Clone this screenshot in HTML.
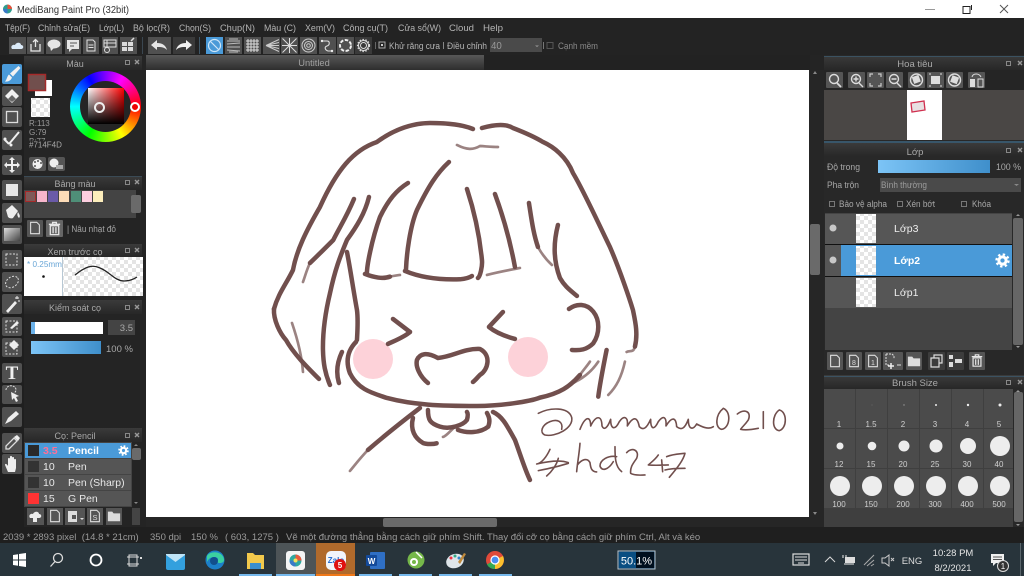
<!DOCTYPE html>
<html><head><meta charset="utf-8"><title>MediBang Paint Pro</title>
<style>
html,body{margin:0;padding:0;width:1024px;height:576px;overflow:hidden;background:#242424}
.a{position:absolute}
svg{position:absolute;left:0;top:0;filter:blur(.3px)}
text{font-family:"Liberation Sans",sans-serif;font-size:10px;fill:#b5b5b5}
.m{font-size:9.6px;fill:#b4b4b4}
.h{font-size:9px;fill:#a8a8a8;text-anchor:middle}
.b{fill:#505050}
.w{fill:#e6e6e6}
.l{fill:none;stroke:#e0e0e0;stroke-width:1.3}
.d{fill:none;stroke:#714F4D;stroke-width:13.5;stroke-linecap:round;stroke-linejoin:round}
.f{fill:none;stroke:#714F4D;stroke-width:8;stroke-linecap:round;stroke-linejoin:round;opacity:.7}
.t{fill:none;stroke:#714F4D;stroke-width:4.8;stroke-linecap:round;stroke-linejoin:round}
.s{font-size:8px;fill:#cfcfcf;text-anchor:middle}
.st{font-size:9.5px;fill:#9a9a9a}
.pi{fill:none;stroke:#888}
.px{stroke:#999;stroke-width:1.4}
</style></head><body>
<svg width="1024" height="576" viewBox="0 0 1024 576" xmlns="http://www.w3.org/2000/svg">
<defs>
<pattern id="ck" width="8" height="8" patternUnits="userSpaceOnUse"><rect width="8" height="8" fill="#fff"/><rect width="4" height="4" fill="#e4e4e4"/><rect x="4" y="4" width="4" height="4" fill="#e4e4e4"/></pattern>
<linearGradient id="hd" x1="0" y1="0" x2="0" y2="1"><stop offset="0" stop-color="#3a3a3a"/><stop offset="1" stop-color="#272727"/></linearGradient>
<linearGradient id="tab" x1="0" y1="0" x2="0" y2="1"><stop offset="0" stop-color="#585858"/><stop offset="1" stop-color="#2e2e2e"/></linearGradient>
<linearGradient id="bl" x1="0" y1="0" x2="1" y2="0"><stop offset="0" stop-color="#7cc4f6"/><stop offset="1" stop-color="#3f8fcb"/></linearGradient>
<linearGradient id="gr" x1="0" y1="0" x2="1" y2="1"><stop offset="0" stop-color="#ddd"/><stop offset="1" stop-color="#444"/></linearGradient>
<symbol id="gear" viewBox="0 0 14 14"><circle cx="7" cy="7" r="3.4" fill="none" stroke="#fff" stroke-width="2.8"/><circle cx="7" cy="7" r="5.6" fill="none" stroke="#fff" stroke-width="2.2" stroke-dasharray="2.2 2.2"/></symbol>
<symbol id="doc" viewBox="0 0 16 16"><path d="M3 1.500h7l3 3v10H3z" fill="none" stroke="#e0e0e0" stroke-width="1.200"/></symbol>
<symbol id="trash" viewBox="0 0 16 16"><path d="M2 3.500h12M6 3V1.500h4V3M3.500 5h9v9.500h-9zM6.500 6.500v6.500M9.500 6.500v6.500" fill="none" stroke="#e6e6e6" stroke-width="1.400"/></symbol>
<symbol id="folder" viewBox="0 0 16 16"><path d="M1 3h5l1.500 2H15v9H1z" fill="#dcdcdc"/></symbol>
</defs>

<!-- base -->
<rect width="1024" height="576" fill="#242424"/>
<!-- title bar -->
<rect width="1024" height="18" fill="#fff"/>
<circle cx="7.500" cy="9" r="4.500" fill="#2f9e8f"/><path d="M7.500 4.500a4.500 4.500 0 0 1 4.500 4.500H7.500z" fill="#e8503a"/><path d="M3 9a4.500 4.500 0 0 0 4.500 4.500V9z" fill="#3a78c8"/>
<text x="17" y="13" textLength="112" lengthAdjust="spacingAndGlyphs" style="font-size:10px;fill:#333">MediBang Paint Pro (32bit)</text>
<path d="M925 9.500h10" stroke="#999" stroke-width="1"/>
<path d="M963 6.500h7v7h-7zM971.500 5v5" fill="none" stroke="#222" stroke-width="1"/>
<path d="M1000 5l8 8M1008 5l-8 8" stroke="#555" stroke-width="1"/>

<!-- menu -->
<rect y="18" width="1024" height="37" fill="#232323"/>
<g>
<text class="m" x="5" y="31" textLength="25" lengthAdjust="spacingAndGlyphs">Tệp(F)</text>
<text class="m" x="38" y="31" textLength="52" lengthAdjust="spacingAndGlyphs">Chỉnh sửa(E)</text>
<text class="m" x="99" y="31" textLength="25" lengthAdjust="spacingAndGlyphs">Lớp(L)</text>
<text class="m" x="133" y="31" textLength="37" lengthAdjust="spacingAndGlyphs">Bộ lọc(R)</text>
<text class="m" x="179" y="31" textLength="32" lengthAdjust="spacingAndGlyphs">Chọn(S)</text>
<text class="m" x="220" y="31" textLength="35" lengthAdjust="spacingAndGlyphs">Chụp(N)</text>
<text class="m" x="264" y="31" textLength="32" lengthAdjust="spacingAndGlyphs">Màu (C)</text>
<text class="m" x="305" y="31" textLength="30" lengthAdjust="spacingAndGlyphs">Xem(V)</text>
<text class="m" x="343" y="31" textLength="45" lengthAdjust="spacingAndGlyphs">Công cụ(T)</text>
<text class="m" x="398" y="31" textLength="43" lengthAdjust="spacingAndGlyphs">Cửa sổ(W)</text>
<text class="m" x="449" y="31" textLength="25" lengthAdjust="spacingAndGlyphs">Cloud</text>
<text class="m" x="483" y="31" textLength="20" lengthAdjust="spacingAndGlyphs">Help</text>
</g>
<!-- toolbar -->
<g>
<rect class="b" x="9" y="37" width="17" height="17" fill="#555"/>
<path d="M12 49c-2-3 1-5 3-4 1-3 6-3 6 0 3 0 3 4 0 4z" fill="#dbeaf8"/>
<rect class="b" x="27" y="37" width="17" height="17"/><path d="M31 44v7h9v-7M35.500 47v-7M33 42l2.500-2.500L38 42" fill="none" stroke="#e6e6e6" stroke-width="1.300"/>
<rect class="b" x="46" y="37" width="16" height="17"/><ellipse cx="54" cy="44" rx="6.500" ry="4.500" fill="#e6e6e6"/><path d="M50 47l1 4 3-3z" fill="#e6e6e6"/>
<rect class="b" x="65" y="37" width="16" height="17"/><rect x="67" y="40" width="12" height="9" fill="#e6e6e6"/><path d="M70 43h7M70 46h4" stroke="#555"/><path d="M69 49v3l3-3z" fill="#e6e6e6"/>
<rect class="b" x="83" y="37" width="16" height="17"/><path d="M87 40h6l2 2v9h-8zM88.500 45h5M88.500 47.500h5" class="l" style="stroke-width:1"/>
<rect class="b" x="102" y="37" width="16" height="17"/><path d="M104 40h12v7h-12zM104 43h12M107 40v7" class="l" style="stroke-width:1"/><circle cx="107" cy="50" r="2.500" fill="none" stroke="#ddd"/>
<rect class="b" x="120" y="37" width="17" height="17"/><rect x="122" y="42" width="5" height="4" fill="#ddd"/><rect x="122" y="47" width="5" height="4" fill="#ddd"/><rect x="128" y="42" width="5" height="4" fill="#ddd"/><rect x="128" y="47" width="5" height="4" fill="#ddd"/><path d="M131 41l3-3" stroke="#ddd" stroke-width="1.500"/>
<rect x="142" y="37" width="1" height="17" fill="#3a4650"/>
<rect class="b" x="148" y="37" width="23" height="17"/><path d="M151 45l6-5v3c6 0 9 3 10 7-3-3-6-3-10-3v3z" fill="#e6e6e6"/>
<rect class="b" x="173" y="37" width="22" height="17" style="fill:#3a3a3a"/><path d="M192 45l-6-5v3c-6 0-9 3-10 7 3-3 6-3 10-3v3z" fill="#f0f0f0"/>
<rect x="199" y="37" width="1" height="17" fill="#3f5666"/>
<rect x="206" y="37" width="17" height="17" fill="#4a9ad8"/><circle cx="214.500" cy="45.500" r="6" fill="none" stroke="#cfe6f8" stroke-width="1.200"/><path d="M210.500 41.500l8 8" stroke="#cfe6f8" stroke-width="1.200"/>
<rect class="b" x="225" y="37" width="17" height="17"/><path d="M227 41h13M227 44l13-1M227 47h13M227 50l13 1M229 39l9 0M229 52l9 0" stroke="#bbb"/>
<rect class="b" x="244" y="37" width="17" height="17"/><path d="M246 41h13M246 44h13M246 47h13M246 50h13M248 39v13M251 39v13M254 39v13M257 39v13" stroke="#ddd"/>
<rect class="b" x="263" y="37" width="17" height="17"/><path d="M266 45.500l13-6M266 45.500l13 6M266 45.500h13M266 45.500l13-3M266 45.500l13 3" stroke="#ccc"/>
<rect class="b" x="281" y="37" width="17" height="17"/><path d="M289.500 45.500l-7-7M289.500 45.500l7-7M289.500 45.500l-7 7M289.500 45.500l7 7M282 45.500h15M289.500 38v15" stroke="#ddd"/>
<rect class="b" x="300" y="37" width="17" height="17"/><circle cx="308.500" cy="45.500" r="6.500" fill="none" stroke="#ccc"/><circle cx="308.500" cy="45.500" r="4" fill="none" stroke="#ccc"/><circle cx="308.500" cy="45.500" r="1.800" fill="none" stroke="#ccc"/>
<rect class="b" x="319" y="37" width="17" height="17"/><path d="M322 41h5c3 0 3 4 0 5-3 1-2 4 1 5h4" class="l" style="stroke-width:1.100"/><circle cx="322" cy="41" r="1.200" fill="#eee"/><circle cx="332" cy="51" r="1.200" fill="#eee"/>
<rect class="b" x="337" y="37" width="17" height="17"/><circle cx="345.500" cy="45.500" r="5.500" fill="none" stroke="#eee" stroke-width="2" stroke-dasharray="3.500 1.500"/>
<rect x="355" y="37" width="17" height="17" fill="#3a3a3a"/><circle cx="363.500" cy="45.500" r="3" fill="none" stroke="#ddd"/><circle cx="363.500" cy="45.500" r="5" fill="none" stroke="#ddd"/><circle cx="363.500" cy="45.500" r="6" fill="none" stroke="#ddd" stroke-width="1.200" stroke-dasharray="1.500 1.500"/>
<rect x="375" y="42" width="1" height="7" fill="#666"/>
<rect x="379" y="42" width="6" height="6" fill="none" stroke="#aaa"/><rect x="381" y="44" width="2" height="2" fill="#ccc"/>
<text x="389" y="49" textLength="51" lengthAdjust="spacingAndGlyphs" style="fill:#b5b5b5;font-size:9px">Khử răng cưa</text>
<rect x="443" y="42" width="1" height="7" fill="#888"/>
<text x="447" y="49" textLength="40" lengthAdjust="spacingAndGlyphs" style="fill:#b5b5b5;font-size:9px">Điều chỉnh</text>
<rect x="490" y="38" width="52" height="14" fill="#4a4a4a"/><text x="491" y="49" style="font-size:9.700px;fill:#999">40</text><path d="M535 45.500h4l-2 1.500z" fill="#999"/>
<rect x="543" y="42" width="1" height="7" fill="#777"/>
<rect x="547" y="42.500" width="6" height="6" fill="none" stroke="#555"/>
<text x="558" y="49" textLength="40" lengthAdjust="spacingAndGlyphs" style="fill:#8a8a8a;font-size:9px">Cạnh mềm</text>
</g>

<!-- tab bar -->
<rect x="146" y="55" width="664" height="15" fill="#222"/>
<rect x="146" y="55" width="338" height="15" fill="url(#tab)"/>
<text class="h" x="314" y="66" style="font-size:9.300px;fill:#a0a0a0">Untitled</text>

<!-- canvas -->
<rect x="146" y="70" width="663" height="447" fill="#fff"/>
<circle cx="373" cy="359" r="20" fill="#fdd2d9"/>
<circle cx="528" cy="357" r="20" fill="#fdd2d9"/>

<g transform="scale(.3333)">
<path class="d" d="M822 927C835 880 860 850 879 810C890 750 920 690 960 621C1010 510 1060 450 1131 426C1180 390 1230 370 1290 369C1350 369 1390 375 1419 387"/>
<path class="d" d="M1446 384C1490 372 1520 372 1539 384C1570 396 1600 408 1629 426C1660 440 1700 470 1719 519C1750 570 1800 680 1830 741C1860 810 1890 900 1899 930C1905 960 1915 1000 1905 1040"/>
<path class="f" d="M1905 1040C1900 1060 1890 1050 1880 1056"/>
<path class="d" d="M822 927C820 960 840 1000 858 1020C880 1060 920 1100 957 1137"/>
<path class="f" d="M876 969C890 1010 905 1060 909 1116"/>
<path class="d" d="M1062 597C1040 650 1020 680 1000 720C970 750 950 770 930 789"/>
<path class="f" d="M930 789C920 810 915 830 909 846"/>
<path class="d" d="M1107 591C1095 640 1070 680 1041 720C1020 770 1005 810 990 880C978 930 968 990 969 1050C970 1090 975 1120 990 1155"/>
<path class="d" d="M1041 756C1050 800 1060 870 1071 930C1075 960 1072 1000 1071 1020"/>
<path class="d" d="M1224 549C1190 570 1165 600 1140 651C1115 720 1100 800 1101 822"/>
<path class="d" d="M1095 822C1120 832 1150 838 1170 830"/>
<path class="f" d="M1170 830C1180 828 1190 826 1200 825"/>
<path class="d" d="M1347 486C1310 520 1285 560 1251 630C1230 680 1220 760 1218 810"/>
<path class="d" d="M1215 813C1260 832 1320 840 1380 838C1400 836 1410 832 1416 828"/>
<path class="d" d="M1401 567C1425 640 1440 720 1446 780C1448 800 1440 830 1434 834"/>
<path class="d" d="M1485 582C1510 650 1530 720 1545 801"/>
<path class="f" d="M1461 825C1500 815 1530 810 1560 804"/>
<path class="f" d="M1371 435C1400 450 1420 450 1440 438C1470 440 1480 441 1494 441"/>
<path class="d" d="M1587 609C1595 660 1600 700 1614 741"/>
<path class="f" d="M1614 741C1630 770 1645 785 1656 795"/>
<path class="d" d="M1674 675C1660 730 1660 780 1680 834C1695 860 1710 870 1731 888"/>
<path class="d" d="M1179 957L1230 996"/><path class="d" d="M1230 996C1215 1010 1185 1022 1164 1032"/>
<path class="d" d="M1509 936L1467 981C1490 1000 1520 1010 1545 1017"/>
<path class="d" d="M1284 1149C1260 1130 1246 1100 1251 1080C1260 1060 1280 1056 1314 1074C1360 1070 1390 1045 1440 1047C1475 1065 1465 1110 1440 1125C1430 1135 1425 1142 1419 1146"/>
<path class="d" d="M1068 1026C1045 1050 1035 1080 1050 1120C1075 1170 1120 1180 1161 1194C1240 1215 1320 1218 1431 1218C1500 1218 1590 1205 1620 1193C1680 1180 1710 1160 1740 1125"/>
<path class="f" d="M1740 1125C1750 1110 1760 1100 1770 1085"/>
<path class="d" d="M1026 1056C1010 1090 1008 1120 1017 1149"/>
<path class="d" d="M1260 1224C1200 1270 1150 1310 1104 1350"/>
<path class="f" d="M1104 1350C1080 1375 1065 1395 1050 1413"/>
<path class="d" d="M1479 1236C1510 1250 1525 1285 1545 1320C1560 1360 1575 1410 1590 1440"/>
<path class="d" d="M1284 1230C1284 1260 1290 1270 1320 1280C1350 1290 1390 1275 1401 1260C1405 1245 1404 1240 1401 1236"/>
<path class="d" d="M1239 1254C1230 1290 1245 1315 1269 1329C1280 1333 1300 1333 1310 1330"/>
<path class="f" d="M1360 1285C1345 1300 1335 1310 1329 1311"/>
<path class="d" d="M1374 1290C1400 1300 1440 1300 1465 1280C1470 1265 1470 1255 1461 1239"/>
<path class="d" d="M1707 927C1730 910 1760 910 1780 935C1800 960 1800 1000 1780 1030C1760 1050 1740 1052 1716 1050"/>
<path class="f" d="M1705 1155C1745 1140 1775 1115 1795 1085"/>
<path class="d" d="M1820 1050C1810 1100 1800 1150 1795 1190"/>
<path class="f" d="M1875 1085C1865 1130 1850 1160 1825 1185"/>
</g>
<g transform="translate(500,300) scale(.3333)">
<path class="t" d="M115 340C150 322 205 320 215 352C222 385 165 412 135 405C118 398 125 375 150 365C172 356 190 365 185 388"/>
<path class="t" d="M240 388C255 350 272 345 272 378C288 345 305 345 306 378C312 392 322 385 332 358C332 388 345 392 358 365C372 345 385 350 382 378C400 348 412 350 418 380C430 392 440 385 452 358C452 388 462 392 475 365C490 345 500 350 498 378C515 350 528 350 530 380C545 392 555 385 565 358C565 388 578 392 590 372C605 380 625 390 640 380"/>
<path class="t" d="M670 325C645 345 645 385 665 388C690 385 695 335 670 325"/>
<path class="t" d="M712 342C735 325 755 335 745 360C735 375 725 382 722 388C740 392 760 388 775 385"/>
<path class="t" d="M790 335L790 385"/>
<path class="t" d="M838 330C815 345 815 390 838 392C862 385 862 335 838 330"/>
<path class="t" d="M150 448C140 470 125 490 110 492C140 485 180 478 205 488"/>
<path class="t" d="M115 512C150 505 180 498 205 490"/>
<path class="t" d="M175 475C170 495 155 515 140 528"/>
<path class="t" d="M240 430C238 460 232 490 230 515M232 495C245 478 262 472 270 488C272 505 275 515 290 516"/>
<path class="t" d="M350 470C325 465 300 480 300 498C305 515 325 510 340 485M345 440C345 470 345 500 365 515"/>
<path class="t" d="M380 458C395 440 420 450 410 475C400 490 390 500 392 520C405 528 425 525 435 525"/>
<path class="t" d="M475 465C465 480 450 490 445 495C470 497 490 495 505 495M485 480L488 515"/>
<path class="t" d="M500 470C520 462 540 462 555 460C550 480 535 500 508 532M495 510C515 505 535 505 555 505"/>
</g>

<!-- scrollbars of canvas -->
<rect x="809" y="70" width="15" height="458" fill="#262626"/>
<rect x="810" y="224" width="10" height="51" rx="2" fill="#6a6a6a"/>
<path d="M813 74l2-3 2 3z" fill="#888"/><path d="M813 512l2 3 2-3z" fill="#888"/>
<rect x="146" y="517" width="664" height="10" fill="#262626"/>
<rect x="383" y="518" width="114" height="9" rx="2" fill="#6a6a6a"/>

<!-- left tools -->
<rect x="0" y="55" width="24" height="472" fill="#1f1f1f"/>
<rect x="2" y="64" width="20" height="20" rx="2" fill="#4a9ad8"/><path d="M18.500 66l2 2-7.500 8.500-3-3zM9 74.500l3 3c-1 3-4 4.500-7 4 2-2 2-5.500 4-7z" fill="#f2f2f2"/>
<rect class="b" x="2" y="86" width="20" height="20" rx="2"/><path d="M5 96l7-7 7 7-7 7z" fill="#f0f0f0"/><path d="M8 99l4-4 4 4-4 3z" fill="#666"/>
<rect class="b" x="2" y="107" width="20" height="20" rx="2"/><rect x="6.500" y="111.500" width="11" height="11" fill="none" stroke="#ddd" stroke-width="1.300"/>
<rect class="b" x="2" y="130" width="20" height="20" rx="2"/><path d="M4 139l5 5M9 144l10-12" stroke="#eee" stroke-width="2"/><circle cx="5" cy="139" r="1.500" fill="#eee"/><circle cx="11" cy="145" r="1.500" fill="#eee"/>
<rect class="b" x="2" y="155" width="20" height="20" rx="2"/><path d="M12 157l3 3h-2v4h4v-2l3 3-3 3v-2h-4v4h2l-3 3-3-3h2v-4H7v2l-3-3 3-3v2h4v-4H9z" fill="#eee"/>
<rect class="b" x="2" y="180" width="20" height="20" rx="2"/><rect x="6" y="184" width="12" height="12" fill="#e8e8e8"/>
<rect class="b" x="2" y="203" width="20" height="20" rx="2"/><path d="M6 210l6-5 6 6-5 7c-2 1-4 0-5-1z" fill="#eee"/><path d="M18 212c1 2 3 4 1 6-2-2-2-4-1-6z" fill="#eee"/>
<rect class="b" x="2" y="225" width="20" height="19" rx="2"/><rect x="4" y="228" width="16" height="13" fill="url(#gr)"/>
<rect class="b" x="2" y="250" width="20" height="19" rx="2"/><rect x="6" y="254" width="11" height="11" fill="none" stroke="#ddd" stroke-dasharray="2 1.500"/>
<rect class="b" x="2" y="272" width="20" height="20" rx="2"/><ellipse cx="12" cy="282" rx="7" ry="5" transform="rotate(-35 12 282)" fill="none" stroke="#ddd" stroke-dasharray="2 1.500"/>
<rect class="b" x="2" y="294" width="20" height="20" rx="2"/><path d="M6 311l9-10 2 2-9 10z" fill="#eee"/><path d="M17 296v3M15 298h4M19 300v2" stroke="#eee"/>
<rect class="b" x="2" y="317" width="20" height="19" rx="2"/><rect x="6" y="321" width="11" height="11" fill="none" stroke="#ddd" stroke-dasharray="2 1.500"/><path d="M10 328l7-7 2 2-7 6z" fill="#eee"/>
<rect class="b" x="2" y="338" width="20" height="19" rx="2"/><rect x="6" y="343" width="11" height="11" fill="none" stroke="#ddd" stroke-dasharray="2 1.500"/><path d="M9 345l5-5 5 5-5 5z" fill="#eee"/>
<rect class="b" x="2" y="363" width="20" height="20" rx="2"/><text x="12" y="379" style="font-family:'Liberation Serif',serif;font-size:19px;fill:#f0f0f0;font-weight:bold;text-anchor:middle">T</text>
<rect class="b" x="2" y="385" width="20" height="19" rx="2"/><path d="M6 390a5 4 0 1 1 8 3" fill="none" stroke="#ddd" stroke-dasharray="2 1"/><path d="M11 392l8 4-3 1 2 4-2 1-2-4-2 2z" fill="#eee"/>
<rect class="b" x="2" y="407" width="20" height="20" rx="2"/><path d="M5 424l3-6 8-7 3 3-8 7z" fill="#eee"/>
<rect class="b" x="2" y="433" width="20" height="20" rx="2"/><path d="M6 449l0-3 8-8 3 3-8 8z" fill="none" stroke="#ddd" stroke-width="1.300"/><path d="M14 437l3-2 3 3-2 3z" fill="#eee"/>
<rect class="b" x="2" y="454" width="20" height="20" rx="2"/><path d="M8 472l-3-7c0-2 2-1 3 1v-7c0-1.500 2-1.500 2 0v-2c0-1.500 2-1.500 2 0v1c0-1.500 2-1.500 2 0v2c0-1.500 2-1.500 2 0v8l-1 4z" fill="#eee"/>

<!-- left panels -->
<rect x="24" y="55" width="122" height="472" fill="#242424"/>
<rect x="24" y="56" width="118" height="14" fill="url(#hd)"/><text class="h" x="75" y="67">Màu</text>
<rect class="pi" x="125.500" y="60.500" width="4" height="4"/><path class="px" d="M135 60l4 4M139 60l-4 4"/>
<rect x="24" y="70" width="122" height="105" fill="#252525"/>
<rect x="35" y="80" width="17" height="16" fill="#fff"/>
<rect x="28.500" y="74.500" width="17" height="16" fill="#714F4D" stroke="#a52a2a" stroke-width="1.500"/>
<rect x="31" y="98" width="19" height="19" fill="url(#ck)"/>
<text x="29" y="126" style="font-size:8px;fill:#9a9a9a">R:113</text>
<text x="29" y="135" style="font-size:8px;fill:#9a9a9a">G:79</text>
<text x="29" y="144" style="font-size:8px;fill:#9a9a9a">B:77</text>
<rect x="27" y="140.500" width="34" height="8" fill="#252525"/>
<text x="29" y="147.500" style="font-size:8px;fill:#a8a8a8">#714F4D</text>
<rect x="29" y="157" width="17" height="14" rx="2" fill="#555"/><circle cx="37.500" cy="164" r="5" fill="#eee"/><circle cx="35" cy="162" r="1" fill="#555"/><circle cx="38" cy="161" r="1" fill="#555"/><circle cx="41" cy="163" r="1" fill="#555"/><circle cx="35" cy="166" r="1" fill="#555"/>
<rect x="48" y="157" width="17" height="14" rx="2" fill="#555"/><circle cx="54" cy="163" r="4.500" fill="#eee"/><rect x="56" y="165" width="7" height="4" fill="#aaa"/>

<rect x="24" y="176" width="118" height="14" fill="url(#hd)"/><rect x="24" y="176" width="118" height="1" fill="#3a4a55"/><text class="h" x="75" y="187">Bảng màu</text>
<rect class="pi" x="125.500" y="180.500" width="4" height="4"/><path class="px" d="M135 180l4 4M139 180l-4 4"/>
<rect x="24" y="190" width="112" height="28" fill="#444"/>
<rect x="25.500" y="191.500" width="10" height="10" fill="#7f5a58" stroke="#a52a2a"/>
<rect x="37" y="191" width="10" height="11" fill="#f7b6cc"/><rect x="48" y="191" width="10" height="11" fill="#6a5aa8"/><rect x="59" y="191" width="10" height="11" fill="#fcdcb8"/><rect x="71" y="191" width="10" height="11" fill="#4f8f78"/><rect x="82" y="191" width="10" height="11" fill="#fdcfe0"/><rect x="93" y="191" width="10" height="11" fill="#fdeebc"/>
<rect x="131" y="195" width="10" height="18" rx="2" fill="#6a6a6a"/>
<rect x="27" y="220" width="16" height="17" rx="1" fill="#555"/><use href="#doc" x="28" y="221" width="14" height="14"/>
<rect x="46" y="220" width="17" height="17" rx="1" fill="#666"/><use href="#trash" x="47" y="221" width="15" height="15"/>
<text x="67" y="232" textLength="49" lengthAdjust="spacingAndGlyphs" style="font-size:9px;fill:#a5a5a5">| Nâu nhạt đỏ</text>

<rect x="24" y="244" width="118" height="13" fill="url(#hd)"/><text class="h" x="75" y="255">Xem trước cọ</text>
<rect class="pi" x="125.500" y="248.500" width="4" height="4"/><path class="px" d="M135 248l4 4M139 248l-4 4"/>
<rect x="24" y="257" width="38" height="39" fill="#fff"/>
<rect x="63" y="257" width="80" height="39" fill="url(#ck)"/>
<text x="27" y="267" textLength="35" lengthAdjust="spacingAndGlyphs" style="font-size:8.500px;fill:#6aa6d6">* 0.25mm</text>
<rect x="62" y="257" width="1" height="39" fill="#b8c8d4"/>
<circle cx="43.500" cy="276.500" r="1.300" fill="#111"/>
<path d="M75 275C85 267 92 264 100 268C110 272 115 281 124 281C130 281 134 279 137 277" fill="none" stroke="#222" stroke-width="1.300"/>

<rect x="24" y="300" width="118" height="14" fill="url(#hd)"/><text class="h" x="75" y="311">Kiểm soát cọ</text>
<rect class="pi" x="125.500" y="305.500" width="4" height="4"/><path class="px" d="M135 305l4 4M139 305l-4 4"/>
<rect x="31" y="322" width="72" height="12" fill="#fff"/><rect x="31" y="322" width="4" height="12" fill="#6bb2ea"/>
<rect x="108" y="320" width="27" height="15" fill="#444"/><text x="133" y="331" style="font-size:9.500px;fill:#a8a8a8;text-anchor:end">3.5</text>
<rect x="31" y="341" width="70" height="13" fill="url(#bl)"/>
<text x="106" y="352" style="font-size:9.500px;fill:#a8a8a8">100 %</text>

<rect x="24" y="428" width="118" height="14" fill="url(#hd)"/><text class="h" x="75" y="439">Cọ: Pencil</text>
<rect class="pi" x="125.500" y="433.500" width="4" height="4"/><path class="px" d="M135 433l4 4M139 433l-4 4"/>
<rect x="24" y="442" width="108" height="65" fill="#444"/>
<rect x="25" y="443" width="106" height="15" fill="#4a9ad8"/>
<rect x="25" y="459" width="106" height="15" fill="#555"/><rect x="25" y="475" width="106" height="15" fill="#555"/><rect x="25" y="491" width="106" height="15" fill="#555"/>
<rect x="28" y="445" width="11" height="11" fill="#2a2a2a"/><rect x="28" y="461" width="11" height="11" fill="#333"/><rect x="28" y="477" width="11" height="11" fill="#333"/><rect x="28" y="493" width="11" height="11" fill="#f33"/>
<text x="43" y="454" style="font-size:10.500px;font-weight:bold;fill:#ff6f96">3.5</text>
<text x="68" y="454" style="font-size:10.500px;font-weight:bold;fill:#fff">Pencil</text>
<use href="#gear" x="118" y="445" width="11" height="11"/>
<text x="43" y="470" style="fill:#e8e8e8;font-size:10.500px">10</text><text x="68" y="470" style="fill:#e8e8e8;font-size:10.500px">Pen</text>
<text x="43" y="486" style="fill:#e8e8e8;font-size:10.500px">10</text><text x="68" y="486" style="fill:#e8e8e8;font-size:10.500px">Pen (Sharp)</text>
<text x="43" y="502" style="fill:#e8e8e8;font-size:10.500px">15</text><text x="68" y="502" style="fill:#e8e8e8;font-size:10.500px">G Pen</text>
<rect x="132" y="448" width="9" height="12" rx="2" fill="#6a6a6a"/><path d="M134 446l2-2 2 2z" fill="#888"/><path d="M134 502l2 2 2-2z" fill="#888"/>
<rect x="27" y="508" width="17" height="17" fill="#555"/><path d="M30 518c-2-3 1-5 3-4 1-3 6-3 6 0 3 0 3 4 0 4h-2v4h-4v-4z" fill="#eee"/>
<rect x="47" y="508" width="16" height="17" fill="#555"/><use href="#doc" x="48" y="509" width="14" height="14"/>
<rect x="65" y="508" width="20" height="17" fill="#555"/><rect x="68" y="511" width="9" height="11" fill="#ddd"/><rect x="72" y="515" width="4" height="4" fill="#555"/><path d="M80 518h4l-2 2z" fill="#ddd"/>
<rect x="87" y="508" width="16" height="17" fill="#555"/><use href="#doc" x="88" y="509" width="14" height="14"/><text x="95" y="520" style="font-size:7.500px;fill:#ddd;text-anchor:middle">S</text>
<rect x="106" y="508" width="16" height="17" fill="#555"/><use href="#folder" x="107" y="509" width="14" height="14"/>
<rect x="132" y="508" width="8" height="17" fill="#444"/>

<!-- right panels -->
<rect x="824" y="55" width="200" height="473" fill="#282828"/>
<rect x="824" y="56" width="200" height="14" fill="url(#hd)"/><rect x="824" y="56" width="200" height="1" fill="#3b5261"/><text class="h" x="915" y="67" style="font-size:9.500px">Hoa tiêu</text>
<rect class="pi" x="1006.500" y="61.500" width="4" height="4"/><path class="px" d="M1018 61l4 4M1022 61l-4 4"/>
<rect x="824" y="70" width="200" height="20" fill="#252525"/>
<g>
<rect x="826" y="72" width="17" height="16" rx="1" fill="#555"/><circle cx="834" cy="79" r="4.500" fill="none" stroke="#ddd" stroke-width="1.400"/><path d="M837 83l4 4" stroke="#ddd" stroke-width="1.800"/>
<rect x="848" y="72" width="17" height="16" rx="1" fill="#555"/><circle cx="856" cy="79" r="4.500" fill="none" stroke="#ddd" stroke-width="1.400"/><path d="M859 83l4 4M853.500 79h5M856 76.500v5" stroke="#ddd" stroke-width="1.400"/>
<rect x="867" y="72" width="17" height="16" rx="1" fill="#555"/><path d="M870 77v-3h3M881 77v-3h-3M870 83v3h3M881 83v3h-3" fill="none" stroke="#ccc" stroke-width="1.200"/>
<rect x="886" y="72" width="17" height="16" rx="1" fill="#555"/><circle cx="894" cy="79" r="4.500" fill="none" stroke="#ddd" stroke-width="1.400"/><path d="M897 83l4 4M891.500 79h5" stroke="#ddd" stroke-width="1.400"/>
<rect x="908" y="72" width="17" height="16" rx="1" fill="#555"/><circle cx="916.500" cy="80" r="6" fill="none" stroke="#ddd" stroke-width="1.400"/><rect x="913" y="76" width="7" height="7" fill="#ddd" transform="rotate(-20 916 80)"/>
<rect x="927" y="72" width="17" height="16" rx="1" fill="#555"/><rect x="931" y="76" width="9" height="8" fill="#ddd"/><path d="M929 74h2M940 74h2M929 86h2M940 86h2" stroke="#ddd"/>
<rect x="946" y="72" width="17" height="16" rx="1" fill="#555"/><circle cx="954.500" cy="80" r="6" fill="none" stroke="#ddd" stroke-width="1.400"/><rect x="951" y="76" width="7" height="7" fill="#ddd" transform="rotate(20 954 80)"/>
<rect x="968" y="72" width="17" height="16" rx="1" fill="#555"/><rect x="970" y="79" width="5" height="8" fill="#ddd"/><rect x="978" y="79" width="5" height="8" fill="none" stroke="#ddd"/><path d="M972 77c1-4 7-4 9 0" fill="none" stroke="#ddd"/>
</g>
<rect x="824" y="90" width="200" height="50" fill="#4a4745"/>
<rect x="907" y="90" width="35" height="50" fill="#fff"/>
<path d="M911 103l13-2 1 9-13 2z" fill="#e8e0e2" stroke="#d0304f" stroke-width="1.300"/>
<rect x="824" y="141" width="200" height="2" fill="#38566a"/>
<rect x="824" y="143" width="200" height="14" fill="url(#hd)"/><text class="h" x="915" y="155" style="font-size:9.500px">Lớp</text>
<rect class="pi" x="1006.500" y="148.500" width="4" height="4"/><path class="px" d="M1018 148l4 4M1022 148l-4 4"/>
<text x="827" y="170" textLength="33" lengthAdjust="spacingAndGlyphs" style="font-size:9.500px;fill:#a8a8a8">Độ trong</text>
<rect x="878" y="160" width="112" height="13" fill="url(#bl)"/>
<text x="996" y="170" textLength="25" lengthAdjust="spacingAndGlyphs" style="font-size:9.500px;fill:#a8a8a8">100 %</text>
<text x="827" y="188" textLength="32" lengthAdjust="spacingAndGlyphs" style="font-size:9.500px;fill:#a8a8a8">Pha trộn</text>
<rect x="880" y="178" width="141" height="14" fill="#4a4a4a"/><text x="881" y="188" textLength="46" lengthAdjust="spacingAndGlyphs" style="font-size:9.500px;fill:#9c9c9c">Bình thường</text><path d="M1014 184h5l-2.500 2z" fill="#888"/>
<rect x="829.500" y="201.500" width="5" height="5" fill="none" stroke="#777"/><text x="839" y="207" textLength="48" lengthAdjust="spacingAndGlyphs" style="font-size:9px;fill:#a8a8a8">Bảo vệ alpha</text>
<rect x="897.500" y="201.500" width="5" height="5" fill="none" stroke="#777"/><text x="906" y="207" textLength="29" lengthAdjust="spacingAndGlyphs" style="font-size:9px;fill:#a8a8a8">Xén bớt</text>
<rect x="961.500" y="201.500" width="5" height="5" fill="none" stroke="#777"/><text x="972" y="207" textLength="19" lengthAdjust="spacingAndGlyphs" style="font-size:9px;fill:#a8a8a8">Khóa</text>
<rect x="825" y="213" width="187" height="137" fill="#444"/>
<rect x="825" y="214" width="187" height="30" fill="#565656"/>
<rect x="825" y="245" width="16" height="31" fill="#565656"/><rect x="841" y="245" width="171" height="31" fill="#4a9ad8"/>
<rect x="825" y="244" width="187" height="1" fill="#111"/><rect x="825" y="276" width="187" height="1" fill="#111"/>
<rect x="825" y="277" width="187" height="31" fill="#565656"/>
<rect x="856" y="214" width="20" height="29" fill="url(#ck)"/><rect x="856" y="246" width="20" height="29" fill="url(#ck)"/><rect x="856" y="278" width="20" height="29" fill="url(#ck)"/>
<circle cx="833" cy="228" r="3.500" fill="#c8c8c8"/><circle cx="833" cy="260" r="3.500" fill="#c8c8c8"/>
<text x="894" y="232" style="font-size:10.500px;fill:#eee">Lớp3</text>
<text x="894" y="264" style="font-size:10.500px;font-weight:bold;fill:#fff">Lớp2</text>
<text x="894" y="296" style="font-size:10.500px;fill:#eee">Lớp1</text>
<use href="#gear" x="995" y="253" width="15" height="15"/>
<rect x="1013" y="218" width="10" height="127" rx="2" fill="#666"/><path d="M1016 216l2-2 2 2z" fill="#999"/><path d="M1016 346l2 2 2-2z" fill="#999"/>
<g>
<rect x="827" y="352" width="16" height="18" rx="1" fill="#555"/><use href="#doc" x="828" y="354" width="14" height="14"/>
<rect x="846" y="352" width="16" height="18" rx="1" fill="#555"/><use href="#doc" x="847" y="354" width="14" height="14"/><text x="854" y="365" style="font-size:7px;fill:#ddd;text-anchor:middle">8</text>
<rect x="865" y="352" width="16" height="18" rx="1" fill="#555"/><use href="#doc" x="866" y="354" width="14" height="14"/><text x="873" y="365" style="font-size:7px;fill:#ddd;text-anchor:middle">1</text>
<rect x="883" y="352" width="20" height="18" rx="1" fill="#555"/><path d="M886 354h6l2 2v3M886 354v11h3" fill="none" stroke="#ddd" stroke-dasharray="2 1"/><path d="M888 366h6M891 363v6" stroke="#eee" stroke-width="1.500"/><path d="M897 365h4" stroke="#ddd"/>
<rect x="906" y="352" width="16" height="18" rx="1" fill="#555"/><use href="#folder" x="907" y="354" width="14" height="14"/>
<rect x="928" y="352" width="17" height="18" rx="1" fill="#3d3d3d"/><path d="M934 358v-3h8v8h-3M931 358h8v9h-8z" fill="none" stroke="#ddd" stroke-width="1.200"/>
<rect x="947" y="352" width="17" height="18" rx="1" fill="#3d3d3d"/><rect x="949" y="355" width="4" height="4" fill="#ddd"/><rect x="949" y="362" width="4" height="5" fill="#ddd"/><rect x="955" y="359" width="7" height="4" fill="#ddd"/>
<rect x="969" y="352" width="16" height="18" rx="1" fill="#555"/><use href="#trash" x="970" y="353" width="14" height="15"/>
</g>
<rect x="824" y="375" width="200" height="2" fill="#3a3a3a"/>
<rect x="824" y="376" width="200" height="13" fill="url(#hd)"/><rect x="824" y="376" width="200" height="1" fill="#3b5261"/><text class="h" x="915" y="386" style="font-size:9.500px">Brush Size</text>
<rect class="pi" x="1006.500" y="380.500" width="4" height="4"/><path class="px" d="M1018 380l4 4M1022 380l-4 4"/>
<rect x="824" y="389" width="189" height="139" fill="#3f3f3f"/>
<g fill="#4b4b4b">
<rect x="824" y="389" width="31" height="39"/><rect x="856" y="389" width="31" height="39"/><rect x="888" y="389" width="31" height="39"/><rect x="920" y="389" width="31" height="39"/><rect x="952" y="389" width="31" height="39"/><rect x="984" y="389" width="29" height="39"/>
<rect x="824" y="429" width="31" height="39"/><rect x="856" y="429" width="31" height="39"/><rect x="888" y="429" width="31" height="39"/><rect x="920" y="429" width="31" height="39"/><rect x="952" y="429" width="31" height="39"/><rect x="984" y="429" width="29" height="39"/>
<rect x="824" y="469" width="31" height="39"/><rect x="856" y="469" width="31" height="39"/><rect x="888" y="469" width="31" height="39"/><rect x="920" y="469" width="31" height="39"/><rect x="952" y="469" width="31" height="39"/><rect x="984" y="469" width="29" height="39"/>
</g>
<g fill="#ededed">
<circle cx="872" cy="405" r=".4" opacity=".4"/><circle cx="904" cy="405" r=".7" opacity=".5"/><circle cx="936" cy="405" r="1"/><circle cx="968" cy="405" r="1.200"/><circle cx="1000" cy="405" r="1.500"/>
<circle cx="840" cy="446" r="3.500"/><circle cx="872" cy="446" r="4.300"/><circle cx="904" cy="446" r="5.500"/><circle cx="936" cy="446" r="6.500"/><circle cx="968" cy="446" r="8"/><circle cx="1000" cy="446" r="10"/>
<circle cx="840" cy="486" r="10"/><circle cx="872" cy="486" r="10"/><circle cx="904" cy="486" r="10"/><circle cx="936" cy="486" r="10"/><circle cx="968" cy="486" r="10"/><circle cx="1000" cy="486" r="10"/>
</g>
<text class="s" x="839" y="427">1</text><text class="s" x="871" y="427">1.5</text><text class="s" x="903" y="427">2</text><text class="s" x="935" y="427">3</text><text class="s" x="967" y="427">4</text><text class="s" x="999" y="427">5</text>
<text class="s" x="839" y="467">12</text><text class="s" x="871" y="467">15</text><text class="s" x="903" y="467">20</text><text class="s" x="935" y="467">25</text><text class="s" x="967" y="467">30</text><text class="s" x="999" y="467">40</text>
<text class="s" x="839" y="507">100</text><text class="s" x="871" y="507">150</text><text class="s" x="903" y="507">200</text><text class="s" x="935" y="507">300</text><text class="s" x="967" y="507">400</text><text class="s" x="999" y="507">500</text>
<rect x="1014" y="392" width="9" height="130" rx="2" fill="#666"/><path d="M1016 392l2-2 2 2z" fill="#999"/><path d="M1016 524l2 2 2-2z" fill="#999"/>

<!-- status -->
<rect y="527" width="1024" height="16" fill="#1f1f1f"/>
<text class="st" x="3" y="540">2039 * 2893 pixel&#160;&#160;(14.8 * 21cm)</text>
<text class="st" x="150" y="540">350 dpi</text><text class="st" x="191" y="540">150 %</text><text class="st" x="225" y="540">( 603, 1275 )</text>
<text class="st" x="286" y="540">Vẽ một đường thẳng bằng cách giữ phím Shift. Thay đổi cỡ cọ bằng cách giữ phím Ctrl, Alt và kéo</text>

<!-- taskbar -->
<rect y="543" width="1024" height="33" fill="#28343b"/>
<path d="M13 555l5-.8v5.300h-5zM19 554l7-1v6.500h-7zM13 560.500h5v5.300l-5-.8zM19 560.500h7v6.500l-7-1z" fill="#fff"/>
<circle cx="58" cy="558" r="4.500" fill="none" stroke="#ddd" stroke-width="1.300"/><path d="M55 561.500l-4.500 5" stroke="#ddd" stroke-width="1.300"/>
<circle cx="96" cy="560" r="5.500" fill="none" stroke="#fff" stroke-width="1.800"/>
<path d="M129 555h8v11h-8zM127 557h12M127 564h12" fill="none" stroke="#ddd" stroke-width="1"/><rect x="140" y="557" width="2" height="2" fill="#ddd"/>
<rect x="276" y="543" width="40" height="33" fill="#4d5457"/>
<rect x="316" y="543" width="39" height="33" fill="#b06a2c"/>
<rect x="316" y="574" width="39" height="2" fill="#f07818"/>
<g fill="#76b9ed"><rect x="239" y="574" width="33" height="2"/><rect x="276" y="574" width="39" height="2"/><rect x="359" y="574" width="33" height="2"/><rect x="399" y="574" width="33" height="2"/><rect x="439" y="574" width="33" height="2"/><rect x="479" y="574" width="33" height="2"/></g>
<path d="M166 554h19v14a2 2 0 0 1-2 2h-15a2 2 0 0 1-2-2z" fill="#33a0de"/><path d="M166 555l9.500 7 9.500-7v-1h-19z" fill="#bfe4f7"/>
<circle cx="215" cy="560" r="9.500" fill="#1c7fc8"/><path d="M207 556c2-5 15-6 17 3 1 5-7 5-8 2 3 0 3-4-2-4-4 0-6 3-7 5z" fill="#3bd0a0"/><circle cx="214" cy="561" r="4" fill="#124f8c"/>
<path d="M247 553h6l2 2h9v14h-17z" fill="#f2c94c"/><rect x="250" y="563" width="11" height="6" fill="#3a8fd0"/>
<rect x="286" y="551" width="19" height="19" rx="3" fill="#f4f4f4"/><circle cx="295.500" cy="560.500" r="6" fill="#2fa8a0"/><path d="M295.500 554.500a6 6 0 0 1 6 6h-6z" fill="#e85a3c"/><path d="M289.500 560.500a6 6 0 0 0 6 6v-6z" fill="#3a7ac8"/><circle cx="295.500" cy="560.500" r="2" fill="#f4e25c"/>
<rect x="326" y="551" width="20" height="19" rx="5" fill="#f2f5fb"/><text x="336" y="563" style="font-size:8px;font-weight:bold;fill:#2a6fd0;text-anchor:middle">Zalo</text>
<circle cx="340" cy="565" r="6" fill="#e01010"/><text x="340" y="568" style="font-size:8px;font-weight:bold;fill:#fff;text-anchor:middle">5</text>
<rect x="370" y="552" width="15" height="17" rx="1" fill="#2f6fc4"/><rect x="366" y="555" width="11" height="11" rx="1" fill="#134a9a"/><text x="371.500" y="564" style="font-size:8px;font-weight:bold;fill:#fff;text-anchor:middle">W</text>
<circle cx="416" cy="560" r="8.500" fill="#76b84a"/><circle cx="414" cy="562" r="4" fill="#fff"/><circle cx="414" cy="562" r="2" fill="#76b84a"/><path d="M416 552l6 6" stroke="#fff" stroke-width="1.500"/>
<ellipse cx="455" cy="561" rx="9" ry="7" fill="#dfe6ea" transform="rotate(-20 455 561)"/><circle cx="451" cy="558" r="1.500" fill="#e34"/><circle cx="455" cy="556" r="1.500" fill="#3a8"/><circle cx="459" cy="558" r="1.500" fill="#38c"/><path d="M458 562l6-9 2 1-6 10z" fill="#c08a3c"/>
<circle cx="495" cy="560" r="9" fill="#e04a3a"/><path d="M495 560L487 564.500A9 9 0 0 0 495 569z" fill="#35a853"/><path d="M495 560l8-4a9 9 0 0 1-8 13z" fill="#fbc02d"/><path d="M495 560L487 564.500A9 9 0 0 0 491 568.100L495 560z" fill="#35a853"/><circle cx="495" cy="560" r="4" fill="#4a8cf0" stroke="#fff" stroke-width="1.200"/>
<rect x="618" y="551" width="37" height="18" fill="#073358" stroke="#b8c4cc" stroke-width="1"/><rect x="619" y="552" width="17" height="16" fill="#0a4e82"/><rect x="636" y="552" width="18" height="16" fill="#000f1e"/>
<text x="636.500" y="564.500" style="font-size:11px;fill:#fff;text-anchor:middle">50.1%</text>
<rect x="793" y="554" width="16" height="11" fill="none" stroke="#ddd" stroke-width="1.200"/><path d="M795 557h12M795 560h12M798 563h6" stroke="#ddd"/>
<path d="M825 562l5-5 5 5" fill="none" stroke="#d8d8d8"/>
<path d="M843 555v3M846 555v3" stroke="#eee"/><rect x="845" y="557" width="10" height="6" fill="#ddd"/><path d="M844 564h10" stroke="#eee"/>
<path d="M864 565l10-10M867 566l7-6M871 566l3-2" stroke="#aaa"/>
<path d="M882 558h3l4-3v11l-4-3h-3z" fill="none" stroke="#ccc"/><path d="M891 558l3 3M894 558l-3 3" stroke="#ccc"/>
<text x="912" y="564" style="font-size:9.500px;fill:#ddd;text-anchor:middle">ENG</text>
<text x="953" y="556" style="font-size:9.500px;fill:#e6e6e6;text-anchor:middle">10:28 PM</text>
<text x="953" y="571" style="font-size:9.500px;fill:#e6e6e6;text-anchor:middle">8/2/2021</text>
<path d="M991 554h13v9h-8l-3 3v-3h-2z" fill="#f0f0f0"/><path d="M993 557h9M993 559.500h9" stroke="#555"/><circle cx="1003" cy="566" r="5.500" fill="#333" stroke="#ddd"/><text x="1003" y="569" style="font-size:8px;fill:#fff;text-anchor:middle">1</text>
<rect x="1020" y="543" width="1" height="33" fill="#5a666c"/>
</svg>
<div class="a" style="left:70px;top:71px;width:71px;height:71px;border-radius:50%;background:conic-gradient(#8000ff 0deg,#ff00ff 30deg,#ff0000 90deg,#ffff00 150deg,#00ff00 210deg,#00ffff 270deg,#0000ff 330deg,#8000ff 360deg)"></div>
<div class="a" style="left:80px;top:81px;width:51px;height:51px;border-radius:50%;background:#252525"></div>
<div class="a" style="left:88px;top:88px;width:36px;height:36px;background:linear-gradient(to top,#000,rgba(0,0,0,0)),linear-gradient(to right,#fff,#f00)"></div>
<div class="a" style="left:94px;top:102px;width:7px;height:7px;border:2.500px solid #eee;border-radius:50%"></div>
<div class="a" style="left:130px;top:102px;width:6px;height:6px;border:2.500px solid #fff;border-radius:50%;background:#e00"></div>
</body></html>
